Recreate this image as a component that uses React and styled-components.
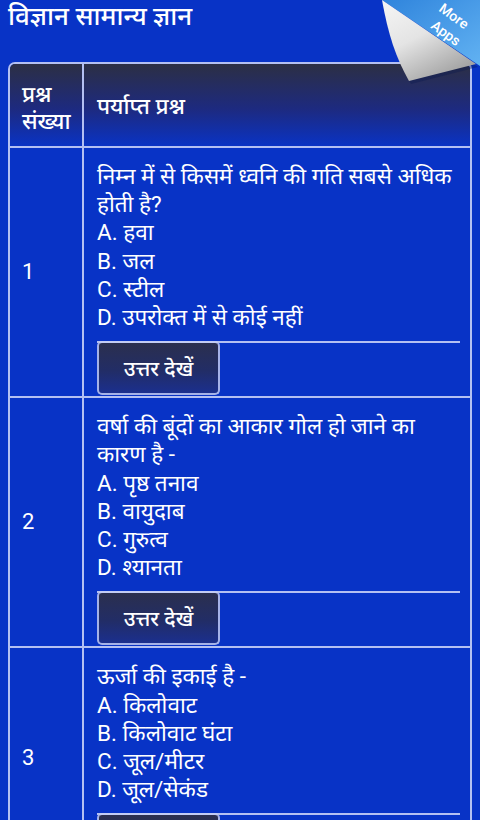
import React from "react";
import styled, { createGlobalStyle } from "styled-components";

const Global = createGlobalStyle`
  html, body { margin: 0; padding: 0; background: #0833c6; }
  body { font-family: Roboto, "Noto Sans", "Noto Sans Devanagari", sans-serif; color: #fff; }
  * { box-sizing: border-box; }
`;

const Page = styled.div`
  position: relative;
  width: 480px;
  min-height: 820px;
  overflow: hidden;
  background: #0833c6;
`;

const Title = styled.h1`
  margin: 0;
  height: 62px;
  padding: 0 0 0 8px;
  font-size: 26px;
  line-height: 33px;
  font-weight: 500;
  color: #fff;
`;

const Table = styled.div`
  margin: 0 8px;
  border: 2px solid #b4c0f2;
  border-bottom: none;
  border-radius: 7px 7px 0 0;
  overflow: hidden;
`;

const Row = styled.div`
  display: grid;
  grid-template-columns: 72px 1fr;
  border-top: ${(p) => (p.$first ? "none" : "2px solid #b4c0f2")};
  background: ${(p) =>
    p.$head ? "linear-gradient(180deg, #2c2f44 0%, #1d2a80 55%, #0a33c4 100%)" : "transparent"};
  min-height: ${(p) => (p.$head ? "82px" : "auto")};
`;

const Cell = styled.div`
  border-left: ${(p) => (p.$right ? "2px solid #b4c0f2" : "none")};
  display: flex;
  flex-direction: column;
  justify-content: ${(p) => (p.$top ? "flex-start" : "center")};
  padding: ${(p) => p.$pad || "0 0 0 12px"};
  font-size: ${(p) => (p.$head ? "22.5px" : "22px")};
  line-height: ${(p) => (p.$head ? "27px" : "28.2px")};
  font-weight: ${(p) => (p.$head ? 500 : 400)};
`;

const Line = styled.div`
  white-space: nowrap;
`;

const Question = styled.div`
  font-size: 22.5px;
  line-height: 28.2px;
`;

const Divider = styled.div`
  margin-top: 10px;
  height: 2px;
  width: 363px;
  background: #b4c0f2;
`;

const Button = styled.button`
  position: relative;
  align-self: flex-start;
  width: 123px;
  height: 54px;
  margin: -2px 0 1px 0;
  border: 2px solid #a5b2e8;
  border-top-color: #c3ccf4;
  border-radius: 5px;
  background: linear-gradient(180deg, #2b2f4e 0%, #222d66 55%, #1b2f8e 100%);
  color: #fff;
  font-family: inherit;
  font-size: 21px;
  font-weight: 500;
  padding: 0;
`;

const Curl = styled.svg`
  position: absolute;
  top: 0;
  right: 0;
  width: 100px;
  height: 90px;
`;

const questions = [
  {
    n: "1",
    q: ["निम्न में से किसमें ध्वनि की गति सबसे अधिक", "होती है?"],
    o: ["A. हवा", "B. जल", "C. स्टील", "D. उपरोक्त में से कोई नहीं"],
  },
  {
    n: "2",
    q: ["वर्षा की बूंदों का आकार गोल हो जाने का", "कारण है -"],
    o: ["A. पृष्ठ तनाव", "B. वायुदाब", "C. गुरुत्व", "D. श्यानता"],
  },
  {
    n: "3",
    q: ["ऊर्जा की इकाई है -"],
    o: ["A. किलोवाट", "B. किलोवाट घंटा", "C. जूल/मीटर", "D. जूल/सेकंड"],
  },
];

function PageCurl() {
  return (
    <Curl viewBox="0 0 100 90">
      <defs>
        <linearGradient id="blueG" x1="0" y1="0" x2="1" y2="1">
          <stop offset="0" stopColor="#2f84dc" />
          <stop offset="1" stopColor="#62b2f2" />
        </linearGradient>
        <linearGradient id="paperG" x1="0" y1="0" x2="0.6" y2="1">
          <stop offset="0" stopColor="#f6f6f6" />
          <stop offset="0.5" stopColor="#e4e4e4" />
          <stop offset="1" stopColor="#a4a4a4" />
        </linearGradient>
      </defs>
      <polygon points="2,0 100,0 100,66" fill="url(#blueG)" />
      <path d="M2,0 C8,34 16,58 29,81 L96,64 Z" fill="#0a1850" opacity="0.35" transform="translate(2,3)" />
      <path d="M2,0 C8,34 16,58 29,81 L96,64 Z" fill="url(#paperG)" />
      <text
        x="74"
        y="21"
        fill="#fff"
        fontSize="14"
        fontWeight="500"
        fontFamily="Roboto, sans-serif"
        textAnchor="middle"
        transform="rotate(36 74 16)"
      >
        More
      </text>
      <text
        x="66"
        y="38"
        fill="#fff"
        fontSize="14"
        fontWeight="500"
        fontFamily="Roboto, sans-serif"
        textAnchor="middle"
        transform="rotate(36 66 33)"
      >
        Apps
      </text>
    </Curl>
  );
}

export default function App() {
  return (
    <Page>
      <Global />
      <Title>विज्ञान सामान्य ज्ञान</Title>
      <Table>
        <Row $head $first>
          <Cell $head $pad="6px 0 0 12px">
            <Line>प्रश्न</Line>
            <Line>संख्या</Line>
          </Cell>
          <Cell $head $right $pad="2px 0 0 13px">
            <Line>पर्याप्त प्रश्न</Line>
          </Cell>
        </Row>
        {questions.map((item) => (
          <Row key={item.n}>
            <Cell>{item.n}</Cell>
            <Cell $right $top $pad="14px 10px 0 13px">
              <Question>
                {item.q.map((l) => (
                  <Line key={l}>{l}</Line>
                ))}
                {item.o.map((l) => (
                  <Line key={l}>{l}</Line>
                ))}
              </Question>
              <Divider />
              <Button>उत्तर देखें</Button>
            </Cell>
          </Row>
        ))}
      </Table>
      <PageCurl />
    </Page>
  );
}
